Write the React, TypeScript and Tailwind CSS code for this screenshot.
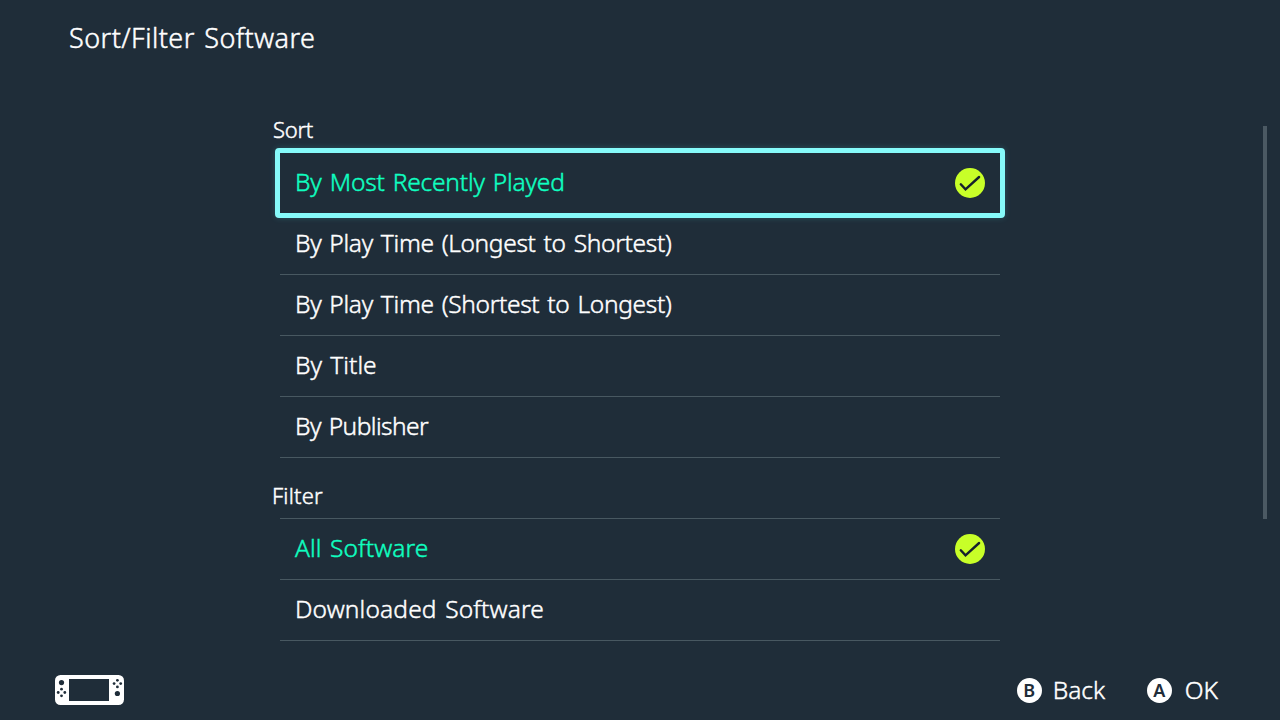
import React from "react";

type Option = { label: string; type: string; checked?: boolean; focused?: boolean };

const sortOptions: Option[] = [
  { label: "By Most Recently Played", type: "tracking-[-0.2px]", checked: true, focused: true },
  { label: "By Play Time (Longest to Shortest)", type: "tracking-[-0.33px]" },
  { label: "By Play Time (Shortest to Longest)", type: "tracking-[-0.33px]" },
  { label: "By Title", type: "tracking-[0px]" },
  { label: "By Publisher", type: "tracking-[-0.55px]" },
];

const filterOptions: Option[] = [
  { label: "All Software", type: "tracking-[0.1px]", checked: true },
  { label: "Downloaded Software", type: "tracking-[0.15px]" },
];

function CheckMark() {
  return (
    <svg className="size-[30px]" viewBox="0 0 30 30" fill="none">
      <circle cx="15" cy="15" r="15" fill="#c8ff28" />
      <path d="M5.8 16.3 L10.5 21.4 L24.1 9" stroke="#16222d" strokeWidth="2.4" strokeLinecap="round" />
    </svg>
  );
}

function Row({ option }: { option: Option }) {
  return (
    <li
      className={`relative flex h-[61px] items-center justify-between border-b px-[15px] ${
        option.focused ? "border-transparent" : "border-[#485861]"
      }`}
    >
      <span className={`pb-[2px] text-[24.5px] leading-[32px] whitespace-nowrap [word-spacing:2px] ${option.type} ${option.checked ? "text-[#0fffc0]" : "text-white"}`}>
        {option.label}
      </span>
      {option.checked && <CheckMark />}
      {option.focused && (
        <div className="absolute -inset-x-[5px] -top-[5px] -bottom-[5px] rounded-[4px] border-[5px] border-[#86fafa] shadow-[0_0_6px_rgba(80,230,240,0.2)]" />
      )}
    </li>
  );
}

function Console() {
  return (
    <svg className="h-[30px] w-[69px]" viewBox="0 0 69 30">
      <rect width="69" height="30" rx="5.5" fill="#fff" />
      <g fill="#1f2d39">
        <rect x="14" y="4" width="40" height="22" />
        <circle cx="6.5" cy="7.6" r="2.6" />
        <circle cx="6.5" cy="14.2" r="1.4" />
        <circle cx="6.5" cy="20.8" r="1.4" />
        <circle cx="3.2" cy="17.5" r="1.4" />
        <circle cx="9.8" cy="17.5" r="1.4" />
        <circle cx="62.4" cy="5.3" r="1.4" />
        <circle cx="62.4" cy="11.9" r="1.4" />
        <circle cx="59.1" cy="8.6" r="1.4" />
        <circle cx="65.7" cy="8.6" r="1.4" />
        <circle cx="62.4" cy="18.5" r="2.6" />
      </g>
    </svg>
  );
}

function Button({ letter }: { letter: string }) {
  return (
    <span className="flex size-[25px] items-center justify-center rounded-full bg-white text-[18px] leading-[25px] font-semibold text-[#1f2d39] [-webkit-text-stroke:0px]">
      {letter}
    </span>
  );
}

export default function App() {
  return (
    <div className="flex h-[720px] w-[1280px] flex-col overflow-hidden bg-[#1f2d39] font-['Noto_Sans',sans-serif] font-light text-white [-webkit-text-stroke:0.45px]">
      <header className="flex h-[75px] items-center pl-[69px]">
        <h1 className="text-[27px] leading-[36px] font-light tracking-[0.45px] [word-spacing:2px]">Sort/Filter Software</h1>
      </header>
      <main className="flex h-[585px] pl-[280px]">
        <div className="w-[720px] pt-[39px]">
          <section>
            <h2 className="-ml-[7px] h-[39px] text-[22px] leading-[30px] font-light tracking-[-0.3px]">Sort</h2>
            <ul>{sortOptions.map((o) => <Row key={o.label} option={o} />)}</ul>
          </section>
          <section className="pt-[22px]">
            <h2 className="-ml-[8px] h-[38px] text-[22px] leading-[30px] font-light tracking-[0.2px]">Filter</h2>
            <ul className="border-t border-[#485861]">{filterOptions.map((o) => <Row key={o.label} option={o} />)}</ul>
          </section>
        </div>
        <div className="mt-[51px] ml-[263px] h-[393px] w-[4px] bg-[#4b5963]" />
      </main>
      <footer className="flex h-[60px] items-center justify-between pr-[62px] pl-[55px]">
        <Console />
        <div className="flex items-center text-[24.5px] leading-[34px]">
          <Button letter="B" />
          <span className="ml-[11px] w-[94px]">Back</span>
          <Button letter="A" />
          <span className="ml-[13px]">OK</span>
        </div>
      </footer>
    </div>
  );
}
